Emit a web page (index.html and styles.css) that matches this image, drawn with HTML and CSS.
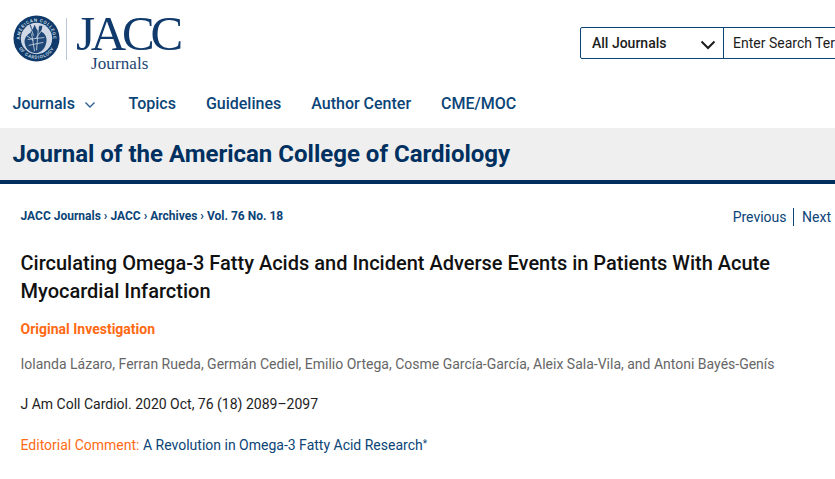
FILE: index.html
```html
<!DOCTYPE html>
<html lang="en">
<head>
<meta charset="utf-8">
<title>Circulating Omega-3 Fatty Acids</title>
<link rel="stylesheet" href="styles.css">
</head>
<body>
<header class="top">
  <a class="logo" href="#">
    <svg class="emblem" width="47" height="47" viewBox="0 0 48 48" aria-hidden="true">
      <defs>
        <path id="arcTop" d="M7.300 27A17 17 0 1 1 40.700 27"/>
        <path id="arcBot" d="M6 34.400A20.800 20.800 0 0 0 42 34.400"/>
      </defs>
      <circle cx="24" cy="24" r="23.500" fill="#0f3a6b"/>
      <circle cx="24" cy="24" r="16" fill="#cfd8e4"/>
      <text class="ring"><textPath href="#arcTop" startOffset="50%">AMERICAN COLLEGE</textPath></text>
      <text class="ring"><textPath href="#arcBot" startOffset="50%">OF CARDIOLOGY</textPath></text>
      <path d="M17 10c1 3 2 5 1 8-4 2-7 6-6 11 1 6 6 10 12 10 5-1 9-5 10-11 1-5-1-9-5-11l1-6-3 0-2 5-3-6-2 5-2-5z" fill="#1f4777"/>
      <path d="M19 19l3 18M26 13l-2 23M15 25l17-2M16 31l15-3M30 15l-7 9M18 13l3 8M14 21l7 5" stroke="#d6dfe9" stroke-width=".8" fill="none"/>
    </svg>
    <span class="logo-rule"></span>
    <span class="wordmark">
      <span class="jacc">JACC</span>
      <span class="journals">Journals</span>
    </span>
  </a>
  <form class="search">
    <div class="select">
      <span>All Journals</span>
      <svg width="16" height="10" viewBox="0 0 16 10" aria-hidden="true"><path d="M1.500 1.500 8 8l6.500-6.500" fill="none" stroke="#1c1c1c" stroke-width="2"/></svg>
    </div>
    <div class="input">Enter Search Term</div>
  </form>
</header>
<nav class="nav">
  <a href="#" class="nav-drop">Journals
    <svg width="12" height="8" viewBox="0 0 12 8" aria-hidden="true"><path d="M1.500 1.500 6 6l4.500-4.500" fill="none" stroke="#2f5f8f" stroke-width="1.400"/></svg>
  </a>
  <a href="#">Topics</a>
  <a href="#">Guidelines</a>
  <a href="#">Author Center</a>
  <a href="#">CME/MOC</a>
</nav>
<div class="band"><h2>Journal of the American College of Cardiology</h2></div>
<main class="content">
  <div class="crumbrow">
    <div class="crumbs"><a href="#">JACC Journals</a> › <a href="#">JACC</a> › <a href="#">Archives</a> › <a href="#">Vol. 76 No. 18</a></div>
    <div class="pager"><a href="#" class="prev">Previous</a><a href="#" class="next">Next</a></div>
  </div>
  <h1>Circulating Omega-3 Fatty Acids and Incident Adverse Events in Patients With Acute Myocardial Infarction</h1>
  <p class="kind">Original Investigation</p>
  <p class="authors">Iolanda Lázaro, Ferran Rueda, Germán Cediel, Emilio Ortega, Cosme García-García, Aleix Sala-Vila, and Antoni Bayés-Genís</p>
  <p class="cite">J Am Coll Cardiol. 2020 Oct, 76 (18) 2089–2097</p>
  <p class="comment"><span class="orange">Editorial Comment:</span> <a href="#">A Revolution in Omega-3 Fatty Acid Research<sup>*</sup></a></p>
</main>
</body>
</html>
```
FILE: styles.css
```css
* { box-sizing: border-box; }
html, body { margin: 0; height: 100%; overflow: hidden; background: #fff; }
body { font-family: Roboto, "Liberation Sans", sans-serif; color: #1d1d1d; width: 835px; }
a { color: #0b4477; text-decoration: none; }

.top { display: flex; height: 86px; padding: 14px 0 0 13px; }
.logo { display: flex; align-items: flex-start; width: 567px; flex: none; color: #0f3a6b; }
.emblem { flex: none; margin-top: 1px; }
.ring { font-family: Roboto, sans-serif; font-size: 4.600px; font-weight: 500; fill: #dfe6ef; letter-spacing: .7px; text-anchor: middle; }
.logo-rule { width: 1px; height: 42px; margin: 4px 9px 0 6px; background: #b8c6d6; flex: none; }
.wordmark { display: flex; flex-direction: column; align-items: flex-start; font-family: "Liberation Serif", serif; width: 106px; }
.jacc { font-size: 49px; line-height: 40px; letter-spacing: -4.200px; height: 40px; white-space: nowrap; }
.journals { font-size: 17px; line-height: 20px; letter-spacing: .1px; margin-left: 15px; color: #1c4474; }

.search { display: flex; flex: none; margin-top: 13px; height: 32px; }
.select { width: 144px; height: 32px; border: 1px solid #0b4477; border-radius: 2px 0 0 2px; display: flex; align-items: center; justify-content: space-between; padding: 0 7px 0 11px; font-size: 14px; font-weight: 500; color: #1c1c1c; }
.select svg { margin-top: 3px; }
.input { width: 200px; height: 32px; margin-left: -1px; border: 1px solid #0b4477; padding-left: 9px; line-height: 30px; font-size: 14px; white-space: nowrap; color: #1c1c1c; }

.nav { display: flex; height: 42px; padding-left: 12.500px; gap: 30px; font-size: 16px; font-weight: 500; align-items: center; padding-bottom: 7px; }
.nav a { white-space: nowrap; }
.nav .nav-drop { width: 86px; display: flex; align-items: center; gap: 9px; }
.nav-drop svg { margin-top: 2px; }

.band { height: 56px; background: #efefef; border-bottom: 4px solid #002f5f; padding: 0 0 0 12.500px; display: flex; align-items: center; }
.band h2 { margin: 0; font-size: 24px; font-weight: 700; color: #00305f; white-space: nowrap; }

.content { padding: 0 4px 0 20.500px; }
.crumbrow { display: flex; justify-content: space-between; align-items: flex-start; height: 65px; padding-top: 24px; }
.crumbs { font-size: 12px; font-weight: 700; line-height: 16px; color: #0b4477; }
.pager { display: flex; font-size: 14px; line-height: 18px; }
.prev { padding-right: 6px; border-right: 1px solid #0b4477; }
.next { padding-left: 8.500px; }

h1 { margin: 0; font-size: 20px; font-weight: 500; line-height: 28px; color: #111; width: 790px; }
.kind { margin: 15px 0 0; font-size: 14px; font-weight: 700; line-height: 18px; color: #ff6a13; }
.authors { margin: 17px 0 0; font-size: 14px; line-height: 18px; color: #666; white-space: nowrap; }
.cite { margin: 22px 0 0; font-size: 14px; line-height: 18px; color: #222; }
.comment { margin: 23px 0 0; font-size: 14px; line-height: 18px; }
.orange { color: #ff6a13; }
sup { font-size: 10px; line-height: 0; vertical-align: 3px; }
```
